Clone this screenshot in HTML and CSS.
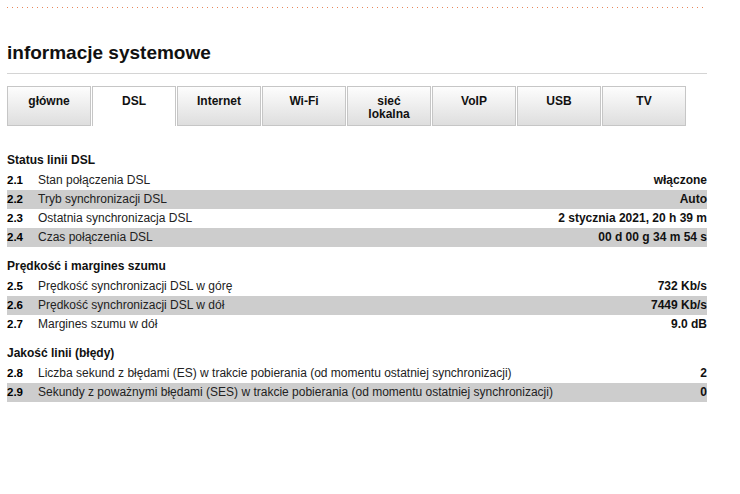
FILE: index.html
```html
<!DOCTYPE html>
<html lang="pl">
<head>
  <meta charset="UTF-8">
  <title>informacje systemowe</title>
  <link rel="stylesheet" href="styles.css">
</head>
<body>
  <div class="page">
    <div class="dots"></div>
    <h1>informacje systemowe</h1>

    <div class="tabs">
      <div class="tab">główne</div>
      <div class="tab active">DSL</div>
      <div class="tab">Internet</div>
      <div class="tab">Wi-Fi</div>
      <div class="tab">sieć<br>lokalna</div>
      <div class="tab">VoIP</div>
      <div class="tab">USB</div>
      <div class="tab">TV</div>
    </div>

    <div class="section first">
      <h2>Status linii DSL</h2>
      <div class="rows">
        <div class="row"><span class="num">2.1</span><span class="label">Stan połączenia DSL</span><span class="value">włączone</span></div>
        <div class="row"><span class="num">2.2</span><span class="label">Tryb synchronizacji DSL</span><span class="value">Auto</span></div>
        <div class="row"><span class="num">2.3</span><span class="label">Ostatnia synchronizacja DSL</span><span class="value">2 stycznia 2021, 20 h 39 m</span></div>
        <div class="row"><span class="num">2.4</span><span class="label">Czas połączenia DSL</span><span class="value">00 d 00 g 34 m 54 s</span></div>
      </div>
    </div>

    <div class="section">
      <h2>Prędkość i margines szumu</h2>
      <div class="rows">
        <div class="row"><span class="num">2.5</span><span class="label">Prędkość synchronizacji DSL w górę</span><span class="value">732 Kb/s</span></div>
        <div class="row"><span class="num">2.6</span><span class="label">Prędkość synchronizacji DSL w dół</span><span class="value">7449 Kb/s</span></div>
        <div class="row"><span class="num">2.7</span><span class="label">Margines szumu w dół</span><span class="value">9.0 dB</span></div>
      </div>
    </div>

    <div class="section">
      <h2>Jakość linii (błędy)</h2>
      <div class="rows">
        <div class="row"><span class="num">2.8</span><span class="label">Liczba sekund z błędami (ES) w trakcie pobierania (od momentu ostatniej synchronizacji)</span><span class="value">2</span></div>
        <div class="row"><span class="num">2.9</span><span class="label">Sekundy z poważnymi błędami (SES) w trakcie pobierania (od momentu ostatniej synchronizacji)</span><span class="value">0</span></div>
      </div>
    </div>
  </div>
</body>
</html>
```

FILE: styles.css
```css
body { margin: 0; background: #fff; color: #111; font-family: "Liberation Sans", Arial, sans-serif; font-size: 12px; }
.page { width: 700px; margin-left: 7px; padding-top: 7px; }

/* dotted orange rule at the very top */
.dots { height: 1px; background: repeating-linear-gradient(to right, #e8875a 0 1px, transparent 1px 5px); }

h1 { margin: 33px 0 0; padding-bottom: 9px; font-size: 19px; line-height: 23px; font-weight: bold; color: #111; border-bottom: 1px solid #d4d4d4; }

.tabs { display: flex; gap: 1px; margin-top: 12px; }
.tab { box-sizing: border-box; width: 84px; height: 40px; padding-top: 8px; border: 1px solid #c6c6c6; background: linear-gradient(#fdfdfd, #dedede); text-align: center; font-weight: bold; line-height: 13px; color: #111; }
.tab.active { background: #fff; border-bottom: none; }

.section { margin-top: 11px; }
.section.first { margin-top: 26px; }
h2 { margin: 0 0 3px; font-size: 12px; line-height: 16px; font-weight: bold; }

.row { display: flex; align-items: baseline; height: 19px; line-height: 19px; }
.rows .row:nth-child(even) { background: #cdcdcd; }
.num { width: 31px; font-size: 11.5px; font-weight: bold; color: #000; }
.label { flex: 1; color: #222; }
.value { font-weight: bold; text-align: right; }
```
